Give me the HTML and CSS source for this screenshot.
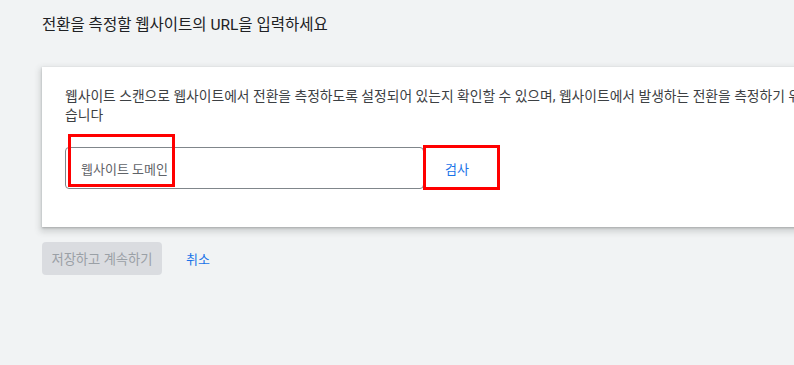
FILE: index.html
```html
<!DOCTYPE html>
<html lang="ko">
<head>
<meta charset="utf-8">
<link rel="stylesheet" href="styles.css">
</head>
<body>
<div class="page">
  <h1 class="title">전환을 측정할 웹사이트의 URL을 입력하세요</h1>
  <div class="card">
    <p class="desc">웹사이트 스캔으로 웹사이트에서 전환을 측정하도록 설정되어 있는지 확인할 수 있으며, 웹사이트에서 발생하는 전환을 측정하기 위해 태그를 설치할 수 있<br>습니다</p>
    <div class="input-row">
      <div class="field"><span class="placeholder">웹사이트 도메인</span></div>
      <button class="scan-btn">검사</button>
      <span class="mark mark-input"></span>
      <span class="mark mark-btn"></span>
    </div>
  </div>
  <div class="actions">
    <button class="save-btn" disabled>저장하고 계속하기</button>
    <button class="cancel-btn">취소</button>
  </div>
</div>
</body>
</html>
```

FILE: styles.css
```css
html, body {
  margin: 0;
  padding: 0;
  background: #f1f3f4;
  overflow: hidden;
}
body {
  width: 794px;
  height: 365px;
  font-family: Roboto, "Noto Sans CJK KR", sans-serif;
}
.page {
  padding: 15px 0 0 42px;
}
.title {
  margin: 0;
  font-size: 15.5px;
  line-height: 21px;
  font-weight: 400;
  color: #202124;
}
.card {
  margin-top: 31px;
  width: 1000px;
  background: #fff;
  padding: 20px 23px 38px;
  box-shadow: 0 1px 2px rgba(60,64,67,.3), 0 3px 6px 2px rgba(60,64,67,.18);
  box-sizing: border-box;
}
.desc {
  margin: 0;
  font-size: 13.8px;
  line-height: 19px;
  color: #3c4043;
  white-space: nowrap;
}
.input-row {
  position: relative;
  margin-top: 22px;
  display: flex;
  align-items: center;
}
.field {
  width: 359px;
  height: 42px;
  box-sizing: border-box;
  border: 1px solid #80868b;
  border-radius: 4px;
  display: flex;
  align-items: center;
  padding-left: 15px;
}
.placeholder {
  font-size: 13px;
  color: #5f6368;
}
.scan-btn {
  border: 0;
  background: transparent;
  padding: 0 21px;
  height: 42px;
  font-family: inherit;
  font-size: 13px;
  color: #1a73e8;
}
.mark {
  position: absolute;
  border: 3px solid #ff0000;
  box-sizing: border-box;
}
.mark-input {
  left: 3px;
  top: -13px;
  width: 107px;
  height: 53px;
}
.mark-btn {
  left: 358px;
  top: -2px;
  width: 77px;
  height: 45px;
}
.actions {
  margin-top: 15px;
  display: flex;
  align-items: center;
  gap: 12px;
}
.save-btn {
  width: 120px;
  height: 33px;
  border: 0;
  border-radius: 4px;
  background: #dadce0;
  color: #9aa0a6;
  font-family: inherit;
  font-size: 13.3px;
  padding: 0;
}
.cancel-btn {
  border: 0;
  background: transparent;
  color: #1a73e8;
  font-family: inherit;
  font-size: 13px;
  padding: 0 12px;
  height: 33px;
}
```
